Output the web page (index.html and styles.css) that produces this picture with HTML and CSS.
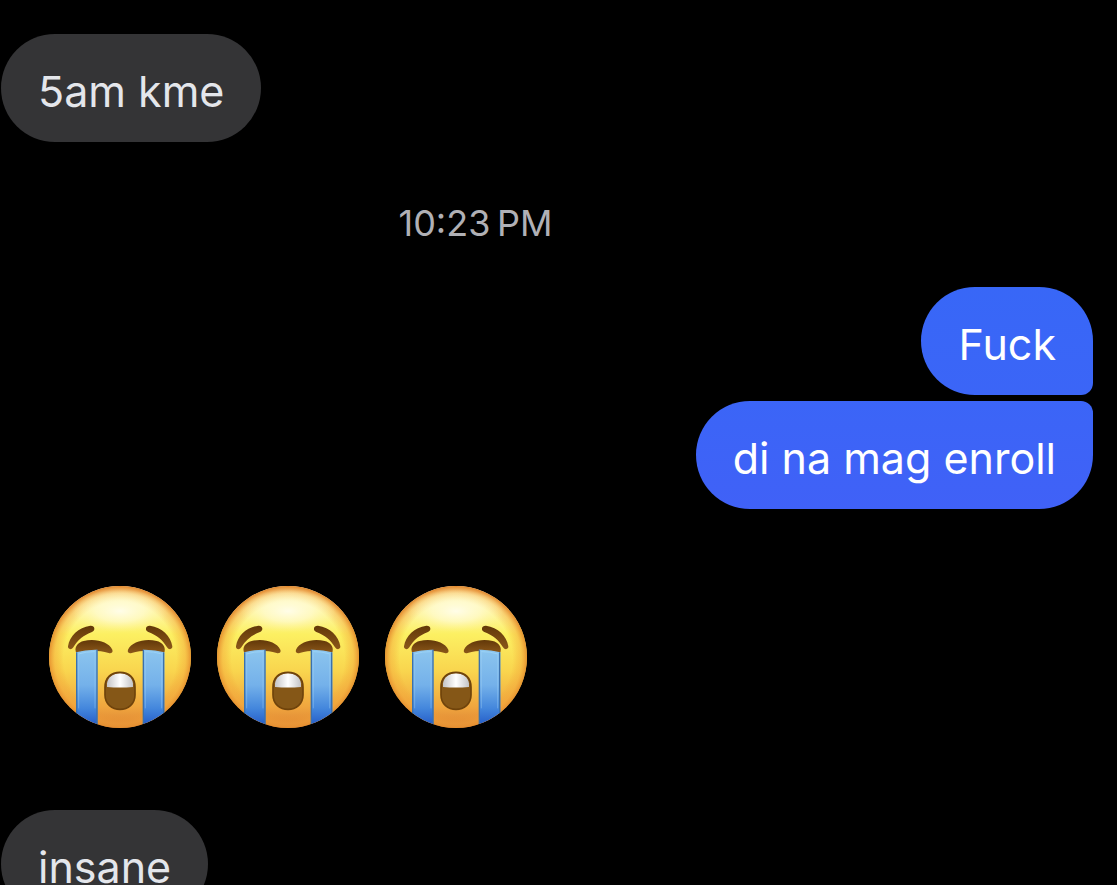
FILE: index.html
```html
<!DOCTYPE html>
<html lang="tl">
<head>
<meta charset="utf-8">
<meta name="viewport" content="width=device-width, initial-scale=1">
<title>Chat</title>
<link rel="stylesheet" href="styles.css">
</head>
<body>
<svg class="defs" aria-hidden="true">
  <defs>
    <linearGradient id="face" x1="0" y1="0" x2="0" y2="1">
      <stop offset="0" stop-color="#fffbe0"/>
      <stop offset=".14" stop-color="#fff8b8"/>
      <stop offset=".34" stop-color="#fcf062"/>
      <stop offset=".6" stop-color="#f9d54e"/>
      <stop offset=".85" stop-color="#f0a63e"/>
      <stop offset="1" stop-color="#dc8234"/>
    </linearGradient>
    <radialGradient id="rim" cx=".5" cy=".51" r=".51">
      <stop offset=".78" stop-color="#f0992f" stop-opacity="0"/>
      <stop offset=".9" stop-color="#f3a53a" stop-opacity=".45"/>
      <stop offset="1" stop-color="#e08428"/>
    </radialGradient>
    <radialGradient id="glow" cx=".5" cy=".5" r=".5">
      <stop offset="0" stop-color="#fffde8"/>
      <stop offset=".5" stop-color="#fffbd0" stop-opacity=".7"/>
      <stop offset="1" stop-color="#fff6a0" stop-opacity="0"/>
    </radialGradient>
    <linearGradient id="tear" x1="0" y1="0" x2="0" y2="1">
      <stop offset="0" stop-color="#8cc5ee"/>
      <stop offset=".45" stop-color="#74b1ea"/>
      <stop offset=".75" stop-color="#4386dc"/>
      <stop offset="1" stop-color="#1f55c4"/>
    </linearGradient>
    <linearGradient id="brow" x1="0" y1="0" x2="0" y2="1">
      <stop offset="0" stop-color="#623809"/>
      <stop offset="1" stop-color="#8b5719"/>
    </linearGradient>
    <linearGradient id="teeth" x1="0" y1="0" x2="1" y2="0">
      <stop offset="0" stop-color="#c4c4c6"/>
      <stop offset=".5" stop-color="#ffffff"/>
      <stop offset="1" stop-color="#c4c4c6"/>
    </linearGradient>
    <clipPath id="disc"><circle cx="240" cy="246" r="213"/></clipPath>
    <clipPath id="lips"><path d="M195 337C195 307 214 292 240 292S285 307 285 337V360C285 387 264 403 240 403S195 387 195 360Z"/></clipPath>
    <g id="half">
      <path d="M84 214C89 182 115 157 151 152C165 151 167 166 156 171C131 180 113 195 100 217C94 226 83 223 84 214Z" fill="url(#brow)"/>
      <path d="M107 228C104 214 115 202 131 198C165 189 206 200 217 224C220 232 214 236 206 234C175 225 142 226 114 233C110 234 107 231 107 228Z" fill="url(#brow)"/>
      <path d="M108 232Q138 223 172 224V460H108Z" fill="url(#tear)"/>
      <path d="M115 237Q140 229 166 230" fill="none" stroke="#9ad2f6" stroke-width="3"/>
      <path d="M110 232V445M171 224V460" fill="none" stroke="#3b71ac" stroke-width="4"/>
      <path d="M116 238V400M165 232V400" fill="none" stroke="#a3d4f6" stroke-width="3" opacity=".4"/>
    </g>
    <symbol id="sob" viewBox="27 33 426 426">
      <circle cx="240" cy="246" r="213" fill="url(#face)"/>
      <circle cx="240" cy="246" r="213" fill="url(#rim)"/>
      <ellipse cx="240" cy="108" rx="145" ry="64" fill="url(#glow)"/>
      <g clip-path="url(#disc)">
        <use href="#half"/>
        <use href="#half" transform="matrix(-1 0 0 1 481 0)"/>
      </g>
      <g clip-path="url(#lips)">
        <path d="M190 285H290V410H190Z" fill="#855717"/>
        <path d="M201 336V325C204 306 220 295 240 295S276 306 279 325V336Q240 339 201 336Z" fill="url(#teeth)"/>
      </g>
      <path d="M195 337C195 307 214 292 240 292S285 307 285 337V360C285 387 264 403 240 403S195 387 195 360Z" fill="none" stroke="#6f430b" stroke-width="5"/>
    </symbol>
  </defs>
</svg>
<main class="chat">
  <p class="bubble received">5am kme</p>
  <time class="stamp" datetime="22:23">10:23&#8201;PM</time>
  <div class="group">
    <p class="bubble sent first">Fuck</p>
    <p class="bubble sent last">di na mag enroll</p>
  </div>
  <div class="emojis" role="img" aria-label="Loudly crying face, three times">
    <svg class="emoji"><use href="#sob"/></svg>
    <svg class="emoji"><use href="#sob"/></svg>
    <svg class="emoji"><use href="#sob"/></svg>
  </div>
  <p class="bubble received">insane</p>
</main>
</body>
</html>
```
FILE: styles.css
```css
* {
  box-sizing: border-box;
}

body {
  margin: 0;
  height: 100vh;
  overflow: hidden;
  background: #000;
  font-family: Inter, "Liberation Sans", sans-serif;
}

.defs {
  position: absolute;
  width: 0;
  height: 0;
}

.chat {
  display: flex;
  flex-direction: column;
  align-items: flex-start;
  padding: 34px 24px 0 1px;
}

.bubble {
  margin: 0;
  padding: 30px 37px 24px;
  border-radius: 54px;
  font-size: 43px;
  line-height: 54px;
  white-space: nowrap;
}

.received {
  background: #343436;
  color: #e4e6eb;
}

.stamp {
  align-self: center;
  margin: 60px 143px 43px 0;
  color: #b0b0b5;
  font-size: 36px;
  line-height: 42px;
}

.group {
  display: flex;
  flex-direction: column;
  align-items: flex-end;
  align-self: flex-end;
  gap: 6px;
}

.sent {
  color: #fff;
}

.first {
  background: linear-gradient(#3867f7, #3b65f7);
  border-bottom-right-radius: 12px;
}

.last {
  background: linear-gradient(#3b65f7, #4061f7);
  border-top-right-radius: 12px;
}

.emojis {
  display: flex;
  gap: 26px;
  margin: 77px 0 82px 48px;
}

.emoji {
  width: 142px;
  height: 142px;
}
```
